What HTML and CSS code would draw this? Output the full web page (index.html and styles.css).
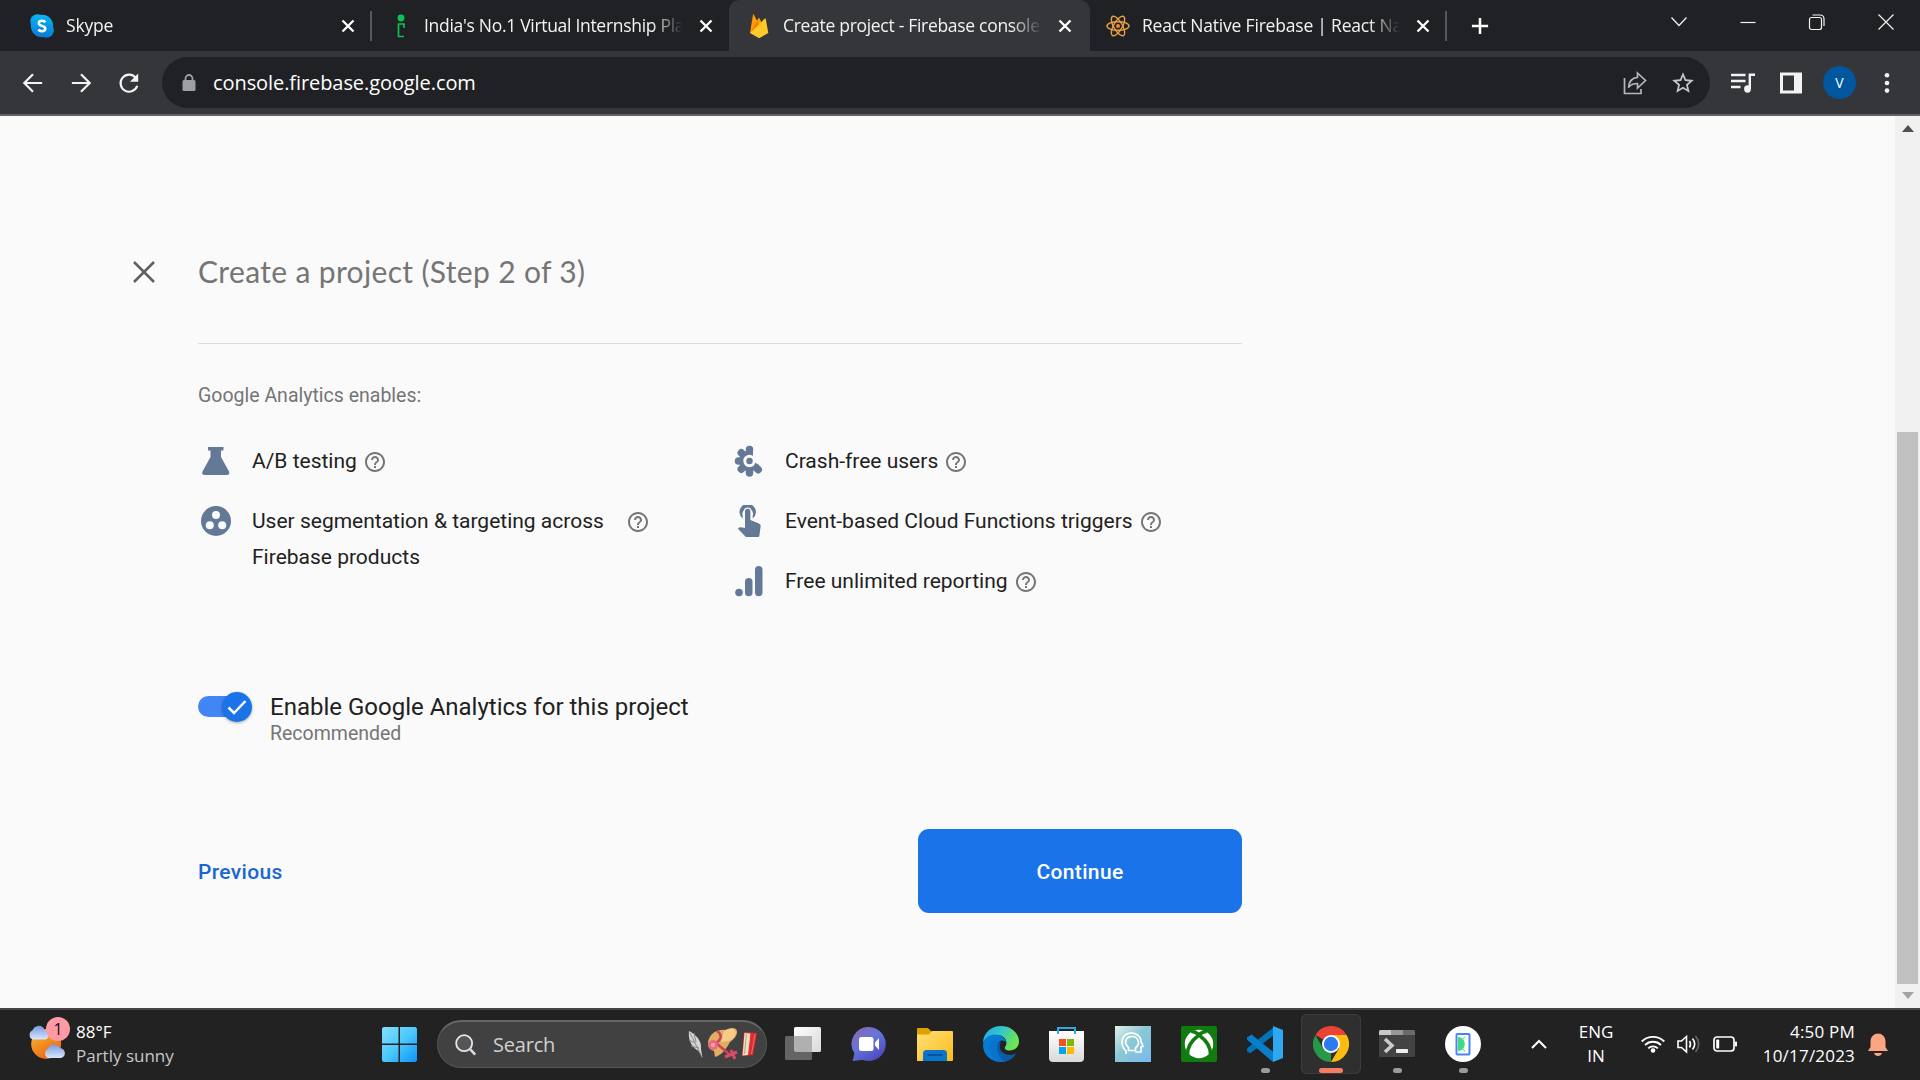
FILE: index.html
```html
<!DOCTYPE html>
<html lang="en">
<head>
<meta charset="utf-8">
<title>Create project - Firebase console</title>
<link rel="stylesheet" href="styles.css">
</head>
<body>
<svg class="defs" width="0" height="0">
  <symbol id="x" viewBox="0 0 20 20"><path d="M4.500 4.500l11 11M15.500 4.500l-11 11" stroke="#fff" stroke-width="2.300" fill="none"/></symbol>
  <symbol id="help" viewBox="0 0 24 24"><path fill="#757575" d="M11 18h2v-2h-2v2zm1-16C6.480 2 2 6.480 2 12s4.480 10 10 10 10-4.480 10-10S17.520 2 12 2zm0 18c-4.410 0-8-3.590-8-8s3.590-8 8-8 8 3.590 8 8-3.590 8-8 8zm0-14c-2.210 0-4 1.790-4 4h2c0-1.100.9-2 2-2s2 .9 2 2c0 2-3 1.750-3 5h2c0-2.250 3-2.500 3-5 0-2.210-1.790-4-4-4z"/></symbol>
</svg>
<header class="tabs">
  <div class="tab first">
    <svg class="fav" viewBox="0 0 24 24"><defs><linearGradient id="sk" x2="0" y2="1"><stop stop-color="#0ab5f3"/><stop offset="1" stop-color="#0a78d4"/></linearGradient></defs><g fill="url(#sk)"><circle cx="7.500" cy="7.500" r="7.300"/><circle cx="16.500" cy="16.500" r="7.300"/><circle cx="12" cy="12" r="11.200"/></g><path d="M15.300 8.200C14.500 7 13.300 6.700 12 6.700c-2 0-3.200 1-3.200 2.500 0 3.600 6.500 1.800 6.500 5.300 0 1.700-1.500 2.700-3.400 2.700-1.600 0-2.800-.5-3.500-1.700" fill="none" stroke="#fff" stroke-width="2.500"/></svg>
    <span class="title">Skype</span><svg class="close"><use href="#x"/></svg>
  </div>
  <div class="tab second">
    <svg class="fav" viewBox="0 0 24 24"><g fill="none" stroke="#0ac256" stroke-width="1.700"><circle cx="13" cy="4" r="2.600" fill="#0ac256"/><path d="M16 14V10H10.500v12.500H16"/></g></svg>
    <span class="title">India's No.1 Virtual Internship Pla</span><svg class="close"><use href="#x"/></svg>
  </div>
  <div class="tab active">
    <svg class="fav" viewBox="0 0 24 24"><path fill="#ffa000" d="M3 19L6 .8c.1-.6.6-.6.9-.1l3.200 6 1.300-2.400c.3-.5.8-.5 1 0L20 19z"/><path fill="#f57c00" d="M3 19L10.100 6.700l3.300 6z"/><path fill="#ffca28" d="M3 19L17.800 4.600c.4-.4.9-.2 1 .3L21.300 19l-8.300 4.700c-.6.3-1.200.3-1.700 0z"/></svg>
    <span class="title">Create project - Firebase console</span><svg class="close"><use href="#x"/></svg>
  </div>
  <div class="tab">
    <svg class="fav" viewBox="0 0 24 24"><g fill="none" stroke="#e5a043" stroke-width="1.400"><ellipse cx="12" cy="12" rx="11" ry="4.300"/><ellipse cx="12" cy="12" rx="11" ry="4.300" transform="rotate(60 12 12)"/><ellipse cx="12" cy="12" rx="11" ry="4.300" transform="rotate(120 12 12)"/></g><circle cx="12" cy="12" r="2" fill="#f08b28"/></svg>
    <span class="title">React Native Firebase | React Nat</span><svg class="close"><use href="#x"/></svg>
  </div>
  <svg class="newtab" viewBox="0 0 20 20"><path d="M10 1v18M1 10h18" stroke="#fff" stroke-width="2.800"/></svg>
  <div class="winctl">
    <svg viewBox="0 0 18 18"><path d="M1.500 4.500L9 12.500l7.500-8"/></svg>
    <svg viewBox="0 0 18 18"><path d="M1.500 9.500h15"/></svg>
    <svg viewBox="0 0 18 18"><path d="M4.500 2h7.500q4 0 4 4v7"/><rect x="1.500" y="4.500" width="12" height="12" rx="2"/></svg>
    <svg viewBox="0 0 18 18"><path d="M1.500 1.500l15 15M16.500 1.500l-15 15"/></svg>
  </div>
</header>
<nav class="toolbar">
  <div class="navs">
    <svg viewBox="0 0 24 24"><path d="M22 12H3M12 2.500L2.500 12l9.500 9.500"/></svg>
    <svg viewBox="0 0 24 24"><path d="M2 12h19M12 2.500l9.500 9.500-9.500 9.500"/></svg>
    <svg viewBox="0 0 24 24"><path d="M19.500 6.500A9.300 9.300 0 1 0 21 15"/><path d="M22 1.500v9h-9z" fill="#f1f3f4" stroke="none"/></svg>
  </div>
  <div class="url">
    <svg class="lock" viewBox="0 0 14 18"><rect x=".5" y="6" width="13" height="11" rx="1.500" fill="#9aa0a6"/><path d="M3.500 7V4.500a3.500 3.500 0 0 1 7 0V7" fill="none" stroke="#9aa0a6" stroke-width="1.800"/></svg>
    <span>console.firebase.google.com</span>
    <svg class="share" viewBox="0 0 24 24"><g fill="none" stroke="#b4b6b9" stroke-width="1.700"><path d="M1.500 7v15.500h16.500V18"/><path d="M14.500 2l8 7.500-8 7.500v-4.500c-4.500 0-7 1-9 4C6 10.500 9 6.800 14.500 6.300z"/></g></svg>
    <svg class="star" viewBox="0 0 24 24"><path fill="#c4c7cb" d="M22 9.240l-7.190-.62L12 2 9.190 8.630 2 9.240l5.460 4.730L5.820 21 12 17.270 18.180 21l-1.630-7.030L22 9.240zM12 15.400l-3.760 2.270 1-4.280-3.320-2.880 4.380-.38L12 6.100l1.710 4.040 4.380.38-3.320 2.880 1 4.280L12 15.400z"/></svg>
  </div>
  <svg class="media" viewBox="0 0 24 22"><g stroke="#f1f3f4" stroke-width="2.400" fill="none"><path d="M0 3h14.500M0 9h14.500M0 15h9.500M18.800 17V2.800h5.200"/></g><ellipse cx="16.500" cy="17" rx="3.400" ry="3.700" fill="#f1f3f4"/></svg>
  <svg class="panel" viewBox="0 0 22 22"><path fill="#f1f3f4" fill-rule="evenodd" d="M0 .5h22v21H0zM3 3.500v15h11v-15z"/></svg>
  <div class="avatar">V</div>
  <svg class="dots" viewBox="0 0 6 22"><g fill="#f1f3f4"><circle cx="3" cy="3.300" r="2.300"/><circle cx="3" cy="11" r="2.300"/><circle cx="3" cy="18.600" r="2.300"/></g></svg>
</nav>
<main class="view">
  <section class="page">
    <div class="head">
      <svg viewBox="0 0 24 24"><path d="M2 2l20 20M22 2L2 22" stroke="#5f6064" stroke-width="2.500"/></svg>
      <h1>Create a project (Step 2 of 3)</h1>
    </div>
    <div class="body">
      <p class="intro">Google Analytics enables:</p>
      <div class="cols">
        <ul>
          <li><svg class="ic" viewBox="0 0 32 32"><path d="M8 2h15.500v3.500H21V12l8 14.500c1 2-.2 3.500-2 3.500H4.500c-1.800 0-3-1.500-2-3.500l8-14.500V5.500H8z"/></svg><span>A/B testing</span><svg class="help"><use href="#help"/></svg></li>
          <li><svg class="ic" viewBox="0 0 32 32"><circle cx="16" cy="16" r="15"/><g fill="#fafafa"><circle cx="16" cy="10" r="4"/><circle cx="9.800" cy="20.300" r="4"/><circle cx="22.200" cy="20.300" r="4"/></g></svg><span class="wide">User segmentation &amp; targeting across Firebase products</span><svg class="help"><use href="#help"/></svg></li>
        </ul>
        <ul>
          <li><svg class="ic" viewBox="0 0 32 32"><g stroke="#647995" stroke-width="7.500" stroke-linecap="round"><path d="M16.500 9V4.500M16.500 23v5M10 16H5.500M11 10.500L8.300 7.800M11 21.500l-2.700 2.700M22 21.500l3.200 3.200"/></g><circle cx="16.500" cy="16" r="10"/><path fill="#fafafa" d="M20 5.500V11.500L22 17.500 27 20.500H30V5.500z"/><circle cx="16.500" cy="16" r="6.200" fill="#fafafa"/><circle cx="16.500" cy="16" r="3.200"/></svg><span>Crash-free users</span><svg class="help"><use href="#help"/></svg></li>
          <li><svg class="ic" viewBox="0 0 32 32"><path d="M9.500 15A8.200 8.200 0 1 1 19.500 15" fill="none"/><path d="M9.700 14.500A8.200 8.200 0 1 1 19.700 14.500V11.500A5.300 5.300 0 1 0 9.700 11.500z" transform="translate(0 -1)"/><path d="M10.800 18V6.500a3.900 3.900 0 0 1 7.800 0V16z" fill="#fafafa"/><path d="M12 19V6.500a2.700 2.700 0 0 1 5.400 0V15l8.500 3.600c1.300.5 2 1.500 1.700 3l-1.200 9c-.2 1.200-.8 1.900-2 1.900H14.400c-.8 0-1.500-.3-2-.9L4.900 23.800l1.300-1.200c.5-.4 1-.5 1.600-.4l4.200.8z"/></svg><span>Event-based Cloud Functions triggers</span><svg class="help"><use href="#help"/></svg></li>
          <li><svg class="ic" viewBox="0 0 32 32"><circle cx="6" cy="27.500" r="3.800"/><rect x="12" y="13" width="7.500" height="18.300" rx="3.750"/><rect x="22" y="1" width="7.500" height="30.300" rx="3.750"/></svg><span>Free unlimited reporting</span><svg class="help"><use href="#help"/></svg></li>
        </ul>
      </div>
      <div class="enable">
        <div class="switch"><i><svg viewBox="0 0 24 24"><path d="M3.500 12.500l5.500 5.500L20.500 6" fill="none" stroke="#fff" stroke-width="2.500"/></svg></i></div>
        <div><div class="label">Enable Google Analytics for this project</div><div class="rec">Recommended</div></div>
      </div>
      <div class="actions"><a class="prev">Previous</a><button>Continue</button></div>
    </div>
  </section>
  <aside class="scroll"><svg viewBox="0 0 12 7"><path d="M0 7L6 0l6 7z" fill="#505050"/></svg><div class="thumb"></div><svg viewBox="0 0 12 7"><path d="M0 0l6 7 6-7z" fill="#a3a3a3"/></svg></aside>
</main>
<footer class="taskbar">
  <div class="weather">
    <svg viewBox="0 0 44 44"><defs><linearGradient id="sun" x2=".6" y2="1"><stop stop-color="#f6bf3a"/><stop offset="1" stop-color="#ee6410"/></linearGradient><linearGradient id="cl" x2="0" y2="1"><stop stop-color="#789be0"/><stop offset="1" stop-color="#d9e6fa"/></linearGradient></defs><circle cx="20" cy="22" r="16.500" fill="url(#sun)"/><path d="M5 17a5.500 5.500 0 0 1 0-10 7 7 0 0 1 13-1c6 0 7 10 1 11z" fill="url(#cl)"/><path d="M22 37.500a5.500 5.500 0 0 1 0-10 7 7 0 0 1 13-1c6.500 0 8 10 1 11z" fill="url(#cl)"/></svg>
    <b>1</b><div><p>88°F</p><p class="dim">Partly sunny</p></div>
  </div>
  <svg class="start" viewBox="0 0 35 35"><defs><linearGradient id="w" x2="1" y2="1"><stop stop-color="#86dffc"/><stop offset=".5" stop-color="#4bc8fc"/><stop offset="1" stop-color="#0c94fa"/></linearGradient></defs><path fill="url(#w)" d="M1.500 0H16.500V16.500H0V1.500zM18 0H33.500L35 1.500V16.500H18zM0 18H16.500V35H1.500L0 33.500zM18 18H35V33.500L33.500 35H18z"/></svg>
  <div class="search">
    <svg class="mag" viewBox="0 0 24 24"><circle cx="10" cy="10" r="8.700" fill="#555" stroke="#e6e6ea" stroke-width="2"/><path d="M16 16l6 6.500" stroke="#d8dbe5" stroke-width="2.800"/></svg>
    <span>Search</span>
    <svg class="art" viewBox="0 0 70 34"><path d="M1 3c6 3 13 9 12 18l1.500 9-4-7C3 19 0 11 1 3z" fill="#d5d5d5"/><path d="M2 5l12 24M1 12l6 3M3 18l8 2M6 5l2 9" stroke="#888" stroke-width="1"/><path d="M20 14C22 4 31 1 38 2l6-2c8 0 6 9-2 14-3 6-9 14-15 15l-1-6c-4-1-6-4-6-9z" fill="#e0ad62"/><path d="M36 3c3-2 6-3 9-2 5 1 3 9-4 12l-8 1z" fill="#f5cb88"/><path d="M29 3c6 4 4 9-1 12l13 11" fill="none" stroke="#cf4158" stroke-width="2.600"/><path d="M37 29l12-5M43 22l4 9" stroke="#db4c6b" stroke-width="3"/><circle cx="25" cy="17" r="5" fill="#e66a7d"/><circle cx="25" cy="17" r="2.200" fill="#ff9ca8"/><path d="M56 4l13 1-4 22-11 1z" fill="#e02a34"/><path d="M56.500 5l6 .5-2.500 21.500-5.500.5z" fill="#f0dfbf"/><path d="M58.500 6l-2 20" stroke="#b99f7c"/><path d="M67 6l-3.500 20" stroke="#f56957" stroke-width="1"/></svg>
  </div>
  <div class="apps">
    <div class="app"><svg viewBox="0 0 36 36"><defs><linearGradient id="tv" x2="1" y2="1"><stop stop-color="#fff"/><stop offset="1" stop-color="#d8d8d8"/></linearGradient></defs><rect x="9" y="1" width="27" height="25" rx="1.500" fill="url(#tv)"/><rect y="10" width="27" height="24" rx="1.500" fill="#646464"/><path d="M9 10h18v16H10.500L9 24.500z" fill="#b0b0b0"/></svg></div>
    <div class="app"><svg viewBox="0 0 36 36"><defs><linearGradient id="ch" x2=".7" y2="1"><stop stop-color="#8d67ad"/><stop offset=".5" stop-color="#6675d8"/><stop offset="1" stop-color="#4d49c0"/></linearGradient></defs><path fill="url(#ch)" d="M18 1a17 17 0 1 1-6 33q-1.500-.5-3 .3L1.500 35l2-7.500A17 17 0 0 1 18 1z"/><rect x="8" y="11" width="14.500" height="14" rx="2.500" fill="#fff"/><path d="M24 16.500l4-4.500v12l-4-4.500z" fill="#fff"/></svg></div>
    <div class="app"><svg viewBox="0 0 36 36"><defs><linearGradient id="fo" x2="1" y2="1"><stop stop-color="#ffe07a"/><stop offset="1" stop-color="#fbbc16"/></linearGradient></defs><path fill="#dea002" d="M0 2.500Q0 2 1 2h10l4 4v6H0z"/><path fill="url(#fo)" d="M0 8.500h11.500L15 5h20q1 0 1 1v28q0 1-1 1H0z"/><path fill="#0b75ca" d="M6 35V27.500Q6 24 9.500 24h17q3.500 0 3.500 3.500V35z"/><path d="M10.500 29h15" stroke="#06509a" stroke-width="1.800"/></svg></div>
    <div class="app"><svg viewBox="0 0 36 36"><defs><linearGradient id="ed" x2="1" y2=".4"><stop stop-color="#1ba6e8"/><stop offset=".5" stop-color="#33c6cc"/><stop offset="1" stop-color="#6ce651"/></linearGradient></defs><path fill="url(#ed)" d="M0 17C0 7 8 0 18 0c11 0 18 8 18 15.500C36 21 32 24.500 27 24.500c-3 0-6-1-5-3.500 4-6-1-12-8-12C7 9 2 13 0 17z"/><path fill="#087bd2" d="M0 19C1 12 6 8.500 12 8.500c6 0 11 4 11 8-2-3-9-3-9 4 0 8 6 14 12 13-3 2-5 2.500-8 2.500C8 36 0 29 0 19z"/><path fill="#0c5ba6" d="M15 16c-6 2-9 20 7 19.500 5-1 9-4 11.300-8-6 3-14.300 1-16.300-5-.6-2 0-4.500 1-5.700z"/><path fill="#0874cb" d="M7 19c1-5 7-7 11-4-5 1-6 11 2 20C12 35 5 28 7 19z"/></svg></div>
    <div class="app"><svg viewBox="0 0 36 36"><defs><linearGradient id="st" x2="0" y2="1"><stop stop-color="#fff"/><stop offset="1" stop-color="#d9d9d9"/></linearGradient></defs><path fill="url(#st)" d="M0 5h35v27q0 4-4 4H4q-4 0-4-4z"/><path d="M9 8V2h17v6" fill="none" stroke="#27acdf" stroke-width="2"/><path fill="#f25022" d="M10 13h7v7h-7z"/><path fill="#7fba00" d="M18 13h7v7h-7z"/><path fill="#00a4ef" d="M10 21h7v7h-7z"/><path fill="#ffb900" d="M18 21h7v7h-7z"/></svg></div>
    <div class="app"><svg viewBox="0 0 36 36"><defs><linearGradient id="hd" x2="1" y2="1"><stop stop-color="#e1f0e9"/><stop offset=".45" stop-color="#8ac8d5"/><stop offset="1" stop-color="#79b9ed"/></linearGradient></defs><path fill="url(#hd)" d="M0 0h36v36H0z"/><g fill="none" stroke="#fff" stroke-width="1.700"><path d="M11 28v-3C7 21 6 17 7.500 13 10 6 20 5 24.500 11q1.500 2 1.500 4.500l2 5-2 .5v5h-6"/><path d="M13.500 24.500v-3C8 17 11 10.500 17 10.500c6 0 9 7 3.500 11.500v2.500z"/></g></svg></div>
    <div class="app"><svg viewBox="0 0 36 36"><rect width="36" height="36" rx="2" fill="#107c10"/><circle cx="18" cy="18" r="14.200" fill="#fff"/><path d="M10 5.500C13 5 16 7 18 8.500 20 7 23 5 26 5.500M18 9C10 15 6 22 6.500 29M18 9c8 6 12 13 11.500 20" fill="none" stroke="#107c10" stroke-width="3.500"/></svg></div>
    <div class="app run"><svg viewBox="0 0 36 36"><path fill="#0072b8" d="M0 25l3 2.500L27 9V1L1 21.500Q-.5 23 0 25z"/><path fill="#087ecd" d="M0 11.500Q-.5 13 1 14.500L26 36l1-9.500L4.500 8.500z"/><path fill="#2ea8f0" d="M26 0l10 4v28l-10 4z"/></svg></div>
    <div class="app run current"><svg viewBox="0 0 36 36"><path fill="#ea4335" d="M18 18L2.400 9A18 18 0 0 1 33.600 9z"/><path fill="#279847" d="M18 18v18A18 18 0 0 1 2.400 9L10.200 22.500z"/><path fill="#fbbc12" d="M18 9h15.600A18 18 0 0 1 18 36l8-13.500z"/><circle cx="18" cy="18" r="9" fill="#fff"/><circle cx="18" cy="18" r="7.200" fill="#2d7af0"/></svg></div>
    <div class="app run"><svg viewBox="0 0 36 36"><rect y="4" width="36" height="27" rx="1.500" fill="#434343"/><path d="M0 9V5.500Q0 4 1.500 4H12v5z" fill="#c9c9c9"/><path d="M12 4h12v5H12z" fill="#989898"/><path d="M24 4h10.500Q36 4 36 5.500V9H24z" fill="#6b6b6b"/><path d="M6 13l7 6.500L6 26" fill="none" stroke="#ccc" stroke-width="3.500"/><rect x="17" y="23" width="12" height="4" rx=".7" fill="#eee"/></svg></div>
    <div class="app run"><svg viewBox="0 0 36 36"><circle cx="18" cy="18" r="18" fill="#fff"/><rect x="11.500" y="8" width="13" height="20.500" rx=".8" fill="#fff" stroke="#4686f4" stroke-width="2"/><path d="M13 11c9 0 9 14 0 14z" fill="#3ddc84"/><path d="M18 13l2-2.500M18 23l2 2.500" stroke="#3ddc84"/></svg></div>
  </div>
  <svg class="chev" viewBox="0 0 16 10"><path d="M1 9l7-7 7 7" fill="none" stroke="#fff" stroke-width="2"/></svg>
  <div class="lang">ENG<br>IN</div>
  <div class="tray">
    <svg viewBox="0 0 24 24"><g fill="none" stroke="#fff" stroke-width="1.800"><path d="M.7 9.500a16 16 0 0 1 22.600 0M4 13a11.500 11.500 0 0 1 16 0M7.200 16.300a7 7 0 0 1 9.600 0"/></g><circle cx="12" cy="18.500" r="2.300" fill="#fff"/></svg>
    <svg viewBox="0 0 24 24"><g fill="none" stroke="#fff" stroke-width="1.600"><path d="M1 9v6.500h3.500l5 4.500V4.500l-5 4.500z"/><path d="M12.500 9q2 3 0 6.500M15.500 6.500q4.500 5.500 0 11"/><path d="M18.500 4q6.500 8 0 16" stroke="#666"/></g></svg>
    <svg viewBox="0 0 24 24"><rect x="1" y="5" width="20" height="14" rx="3" fill="none" stroke="#fff" stroke-width="1.700"/><rect x="3.200" y="7.500" width="3" height="9" rx=".8" fill="#fff"/><rect x="22" y="9.500" width="2" height="5" rx=".8" fill="#fff"/></svg>
  </div>
  <div class="clock">4:50 PM<br>10/17/2023</div>
  <svg class="bell" viewBox="0 0 20 23"><path fill="#fba583" d="M2.500 14V8a7.500 7.500 0 0 1 15 0v6l2.500 4H0zM6 20h8q-1 3-4 3t-4-3z"/></svg>
</footer>
</body>
</html>
```
FILE: styles.css
```css
* { box-sizing: border-box; }
body {
  margin: 0;
  width: 1920px;
  height: 1080px;
  overflow: hidden;
  display: flex;
  flex-direction: column;
  font-family: "Open Sans", "Noto Sans", sans-serif;
  background: #fafafa;
}
svg { display: block; flex: none; }
p, h1, ul { margin: 0; padding: 0; }
.defs { position: absolute; }

/* Tab strip */
.tabs { height: 51px; flex: none; display: flex; align-items: center; background: #202124; color: #f1f3f4; }
.tab {
  width: 357px;
  height: 51px;
  display: flex;
  align-items: center;
  padding: 0 14px 0 16px;
}
.tab.first { width: 372px; padding-left: 30px; }
.tab.second { padding-right: 13px; }
.tab.active { width: 361px; background: #35363a; border-radius: 10px 10px 0 0; padding: 0 15px 0 18px; }
.tab.first, .tab:nth-child(4) {
  background: linear-gradient(#56585c, #56585c) right center / 2px 30px no-repeat;
}
.fav { width: 24px; height: 24px; margin-right: 12px; }
.title {
  flex: 1;
  overflow: hidden;
  white-space: nowrap;
  font-size: 17.500px;
  line-height: 24px;
  padding-bottom: 1px;
  letter-spacing: -0.200px;
  margin-right: 13px;
  -webkit-mask-image: linear-gradient(to right, #000 88%, transparent);
  mask-image: linear-gradient(to right, #000 88%, transparent);
}
.second .title { letter-spacing: -0.300px; }
.active .title { letter-spacing: -0.300px; }
.close { width: 20px; height: 20px; }
.newtab { width: 18px; height: 18px; margin-left: 24px; }
.winctl { display: flex; gap: 51px; margin-left: 181px; padding-bottom: 8px; }
.winctl svg { width: 18px; height: 18px; fill: none; stroke: #f1f3f4; stroke-width: 1.200; }

/* Toolbar */
.toolbar { height: 65px; flex: none; display: flex; align-items: center; background: #35363a; border-bottom: 2px solid #626366; }
.navs { display: flex; gap: 26px; padding-left: 22px; width: 162px; }
.navs svg { width: 22px; height: 22px; fill: none; stroke: #f1f3f4; stroke-width: 2.400; }
.url { width: 1548px; height: 51px; border-radius: 26px; background: #202124; display: flex; align-items: center; padding: 0 14px 0 20px; color: #fff; font-size: 20px; }
.url span { flex: 1; letter-spacing: -0.080px; }
.lock { width: 14px; height: 18px; margin-right: 17px; }
.share { width: 24px; height: 24px; margin-right: 23px; }
.star { width: 26px; height: 26px; }
.media { width: 24px; height: 22px; margin-left: 21px; }
.panel { width: 22px; height: 22px; margin-left: 25px; }
.avatar { width: 33px; height: 33px; margin-left: 21px; border-radius: 50%; background: #0057a0; color: #fff; font-size: 14px; display: grid; place-items: center; }
.dots { width: 6px; height: 22px; margin-left: 28px; }

/* Console page */
.view { height: 892px; flex: none; display: flex; font-family: Roboto, sans-serif; font-size: 21px; color: #212121; }
.page { width: 1895px; padding-top: 132px; }
.head { display: flex; align-items: center; height: 48px; padding-left: 132px; }
.head svg { width: 24px; height: 24px; }
h1 { margin-left: 42px; padding-bottom: 2px; font: 400 30px/40px Lato, sans-serif; color: #757575; letter-spacing: 0.350px; white-space: nowrap; }
.body { width: 1044px; margin-left: 198px; margin-top: 47px; border-top: 1px solid #dcdcdc; }
.intro { margin-top: 40px; font-size: 19.500px; line-height: 24px; color: #757575; }
.cols { display: grid; grid-template-columns: 533px 1fr; margin-top: 35px; height: 186px; }
ul { list-style: none; }
li { display: flex; align-items: flex-start; line-height: 36px; min-height: 60px; white-space: nowrap; }
.ic { width: 32px; height: 32px; margin: 2px 20px 0 2px; fill: #647995; }
.wide { width: 368px; white-space: normal; }
.help { width: 24px; height: 24px; margin: 7px 0 0 6px; }
.enable { display: flex; margin-top: 58px; }
.switch { width: 54px; height: 21px; border-radius: 11px; background: linear-gradient(to right, #4285f4 40px, transparent 40px); margin: 9px 18px 0 0; display: flex; justify-content: flex-end; align-items: center; }
.switch i { width: 30px; height: 30px; flex: none; border-radius: 50%; background: #1a73e8; box-shadow: 0 1px 3px #0005; display: grid; place-items: center; }
.switch svg { width: 24px; height: 24px; }
.label { font-size: 24px; line-height: 40px; }
.rec { font-size: 19.500px; line-height: 24px; color: #757575; margin-top: -5px; }
.actions { display: flex; justify-content: space-between; align-items: center; margin-top: 83px; font-weight: 500; }
.prev { color: #1967d2; letter-spacing: 0.350px; padding-top: 2px; }
button { width: 324px; height: 84px; border: 0; border-radius: 11px; background: #1a73e8; color: #fff; font: 500 21px Roboto, sans-serif; letter-spacing: 0.350px; padding: 2px 0 0; }
.scroll { width: 25px; background: #f1f1f1; display: flex; flex-direction: column; align-items: center; padding: 9px 0; }
.scroll svg { width: 12px; height: 7px; }
.thumb { width: 21px; height: 552px; background: #c1c1c1; margin: 300px 0 8px; flex: none; }

/* Taskbar */
.taskbar { height: 72px; flex: none; display: flex; align-items: center; background: #222223; border-top: 2px solid #454545; padding-bottom: 2px; color: #fff; font-size: 17px; line-height: 24px; }
.weather { width: 382px; display: flex; align-items: center; padding-left: 28px; position: relative; }
.weather svg { width: 40px; height: 44px; margin-right: 8px; }
.weather b { position: absolute; left: 46px; top: -3px; width: 24px; height: 24px; border-radius: 50%; background: #ff99a4; color: #111; font-weight: 400; font-size: 16px; text-align: center; }
.dim { color: #c8c8c8; }
.start { width: 35px; height: 35px; }
.search { width: 330px; height: 48px; margin-left: 20px; border-radius: 24px; background: #414141; border: 1px solid #565656; border-top: 2px solid #666; display: flex; align-items: center; padding: 0 8px 0 17px; font-size: 20px; color: #d0d0d0; }
.mag { width: 22px; height: 24px; margin-right: 16px; }
.search span { flex: 1; letter-spacing: -0.200px; }
.art { width: 70px; height: 34px; }
.apps { display: flex; margin-left: 6px; gap: 6px; }
.app { width: 60px; height: 60px; border-radius: 6px; display: flex; flex-direction: column; align-items: center; padding-top: 12px; }
.app > svg { width: 36px; height: 36px; }
.app.current { background: #2f2f2f; box-shadow: inset 0 0 0 1px #3c3c3c; }
.run::after { content: ""; width: 9px; height: 5px; border-radius: 3px; background: #9a9a9a; margin-top: 6px; }
.current::after { width: 24px; background: #f77c64; }
.chev { width: 16px; height: 10px; margin-left: 38px; margin-right: 24px; }
.lang { width: 50px; text-align: center; }
.tray { display: flex; gap: 12px; margin-left: 20px; }
.tray svg { width: 24px; height: 24px; }
.clock { width: 118px; text-align: right; letter-spacing: 0.200px; }
.bell { width: 20px; height: 23px; margin-left: 13px; }
```
